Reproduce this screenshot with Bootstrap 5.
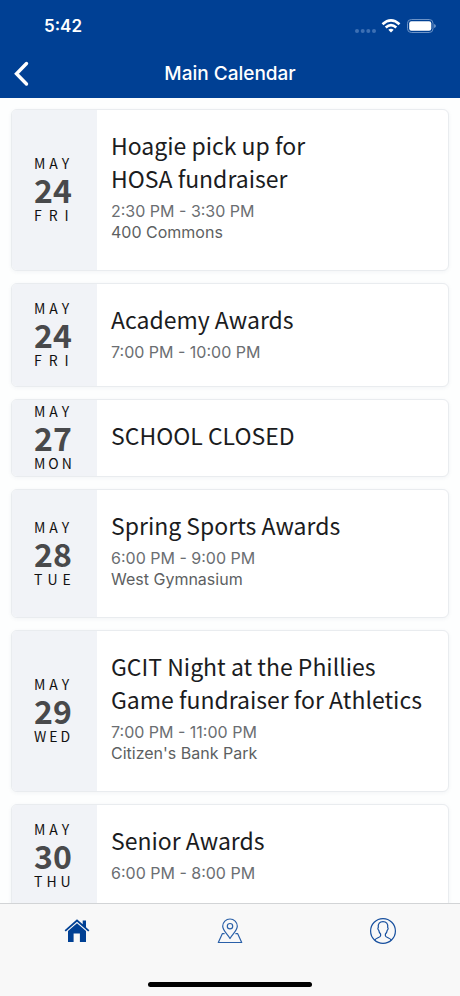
<!DOCTYPE html>
<html lang="en">
<head>
<meta charset="utf-8">
<meta name="viewport" content="width=device-width, initial-scale=1">
<title>Main Calendar</title>
<link rel="stylesheet" href="https://cdn.jsdelivr.net/npm/bootstrap@5.3.0/dist/css/bootstrap.min.css">
<style>
  body { font-family: Inter, "Liberation Sans", sans-serif; background: #fdfefe; }
  .app-header { background: #004094; }
  .status-row { height: 50px; padding: 1px 24px 0 44px; }
  .status-time { font-size: 17px; line-height: 24px; font-weight: 600; }
  .title-row { height: 48px; }
  .title-row h1 { font-size: 19px; line-height: 24px; font-weight: 500; }
  .side { width: 44px; height: 48px; }
  .event-list { padding: 11px 11px 12px; gap: 12px; scrollbar-width: none; }
  .event-list::-webkit-scrollbar { display: none; }
  .event { min-height: 78px; border: 1px solid #e9ecef; border-radius: 6px; background: #fff; box-shadow: 0 1px 4px rgba(40, 60, 90, .05); }
  .event-date { width: 85px; padding: 0 0 1px 22px; background: #f1f3f7; border-radius: 5px 0 0 5px; color: #111; font-family: "Noto Sans CJK JP", sans-serif; }
  .event-date span { font-size: 14px; line-height: 23px; letter-spacing: 4px; }
  .event-date .tight { letter-spacing: 3px; }
  .event-date .loose { letter-spacing: 5px; }
  .event-date .wide { letter-spacing: 7px; }
  .event-date strong { font-size: 32px; line-height: 29px; color: #48494b; }
  .event-body { padding: 19px 12px 23px 14px; }
  .event-body h2 { font-family: "Noto Sans CJK JP", sans-serif; font-size: 23px; line-height: 33px; font-weight: 400; color: #1b1c1e; }
  .event-body p { font-size: 16px; line-height: 21px; color: #6b6e72; }
  .event-time { padding-top: 6px; }
  .event-body .event-place { color: #5d5f62; padding-bottom: 4px; }
  .tab-bar { background: #f8f8f8; border-top: 1px solid #d2d4d6; }
  .tab-bar .nav-link { color: #004094; padding: 13px 0; line-height: 1; }
  .home-bar { width: 164px; height: 5px; margin: 24px auto 9px; background: #000; }
</style>
<script src="https://cdn.jsdelivr.net/npm/bootstrap@5.3.0/dist/js/bootstrap.bundle.min.js"></script>
</head>
<body>
<div class="vh-100 d-flex flex-column overflow-hidden">
  <header class="app-header text-white flex-shrink-0">
    <div class="status-row d-flex align-items-center justify-content-between">
      <span class="status-time">5:42</span>
      <svg width="82" height="16" viewBox="0 0 82 16" role="img" aria-label="Wi-Fi on, battery full">
        <g fill="#3d70b4"><circle cx="3" cy="13" r="2"/><circle cx="8.700" cy="13" r="2"/><circle cx="14.300" cy="13" r="2"/><circle cx="20" cy="13" r="2"/></g>
        <g fill="none" stroke="#fff" stroke-width="2.600"><path d="M28.500 6.200Q37 -1.600 45.500 6.200"/><path d="M31.700 9.500Q37 4.800 42.300 9.500"/></g>
        <path d="M37 14.600l-2.700-2.800Q37 9.700 39.700 11.800z" fill="#fff"/>
        <rect x="53.500" y="1.500" width="25.500" height="13" rx="3.800" fill="none" stroke="#6c93c7"/>
        <rect x="55.200" y="3.200" width="22.100" height="9.600" rx="2.200" fill="#fff"/>
        <path d="M80.200 6q1.600.5 1.600 2t-1.600 2z" fill="#7fa1ce"/>
      </svg>
    </div>
    <div class="title-row d-flex align-items-center justify-content-between">
      <button type="button" class="side btn border-0 p-0 text-white" aria-label="Back">
        <svg width="44" height="48" viewBox="0 0 44 48" class="d-block"><path d="M26.500 13.500L16.500 23.800L26.500 34" fill="none" stroke="#fff" stroke-width="3.400" stroke-linecap="round" stroke-linejoin="miter"/></svg>
      </button>
      <h1 class="m-0">Main Calendar</h1>
      <div class="side"></div>
    </div>
  </header>

  <main class="event-list d-flex flex-column flex-grow-1 overflow-auto">
    <article class="event d-flex flex-shrink-0">
      <div class="event-date d-flex flex-column justify-content-center flex-shrink-0"><span>MAY</span><strong>24</strong><span class="wide">FRI</span></div>
      <div class="event-body"><h2 class="m-0">Hoagie pick up for<br>HOSA fundraiser</h2><p class="event-time m-0">2:30 PM - 3:30 PM</p><p class="event-place m-0">400 Commons</p></div>
    </article>
    <article class="event d-flex flex-shrink-0">
      <div class="event-date d-flex flex-column justify-content-center flex-shrink-0"><span>MAY</span><strong>24</strong><span class="wide">FRI</span></div>
      <div class="event-body"><h2 class="m-0">Academy Awards</h2><p class="event-time m-0">7:00 PM - 10:00 PM</p></div>
    </article>
    <article class="event d-flex flex-shrink-0">
      <div class="event-date d-flex flex-column justify-content-center flex-shrink-0"><span>MAY</span><strong>27</strong><span class="tight">MON</span></div>
      <div class="event-body"><h2 class="m-0">SCHOOL CLOSED</h2></div>
    </article>
    <article class="event d-flex flex-shrink-0">
      <div class="event-date d-flex flex-column justify-content-center flex-shrink-0"><span>MAY</span><strong>28</strong><span class="loose">TUE</span></div>
      <div class="event-body"><h2 class="m-0">Spring Sports Awards</h2><p class="event-time m-0">6:00 PM - 9:00 PM</p><p class="event-place m-0">West Gymnasium</p></div>
    </article>
    <article class="event d-flex flex-shrink-0">
      <div class="event-date d-flex flex-column justify-content-center flex-shrink-0"><span>MAY</span><strong>29</strong><span class="tight">WED</span></div>
      <div class="event-body"><h2 class="m-0">GCIT Night at the Phillies<br>Game fundraiser for Athletics</h2><p class="event-time m-0">7:00 PM - 11:00 PM</p><p class="event-place m-0">Citizen's Bank Park</p></div>
    </article>
    <article class="event d-flex flex-shrink-0">
      <div class="event-date d-flex flex-column justify-content-center flex-shrink-0"><span>MAY</span><strong>30</strong><span>THU</span></div>
      <div class="event-body"><h2 class="m-0">Senior Awards</h2><p class="event-time m-0">6:00 PM - 8:00 PM</p></div>
    </article>
  </main>

  <footer class="tab-bar flex-shrink-0">
    <nav class="nav nav-fill" aria-label="Main">
      <a class="nav-link nav-item w-25" href="#" aria-label="Home" aria-current="page">
        <svg width="28" height="28" viewBox="0 0 28 28"><g fill="#004094"><path d="M14 2.200L1.600 13.200l1.200 1.300L14 4.700l11.200 9.800 1.200-1.300-3.400-3V3.600h-3.300v3.700z"/><path d="M14 6.200L5 14.100V25h5.600v-8.500h6.300V25H23V14.100z"/></g></svg>
      </a>
      <a class="nav-link nav-item w-25" href="#" aria-label="Map">
        <svg width="28" height="28" viewBox="0 0 28 28"><g fill="none" stroke="#2a60a8" stroke-width="1.200" stroke-linejoin="round"><path d="M14 21.500C11.500 17 6.700 13.500 6.700 9.300A7.300 7.300 0 0 1 21.300 9.300C21.300 13.500 16.500 17 14 21.500z"/><circle cx="14" cy="9.200" r="2.700"/><path d="M8.600 16.700H6.300L2.300 25.500H25.700L21.700 16.700H19.400"/></g></svg>
      </a>
      <a class="nav-link nav-item w-25" href="#" aria-label="Profile">
        <svg width="28" height="28" viewBox="0 0 28 28"><g fill="none" stroke="#164f9e" stroke-width="1.200" stroke-linejoin="round"><circle cx="14" cy="14" r="12.400"/><path d="M5.700 23.200C6.500 21 11.600 20.500 11.600 18.700V17C10.400 16 9.900 14.500 9.700 13.200C8.700 12.600 8.700 10.900 9.300 10.500C8.800 6.600 10.700 4.700 14 4.700S19.200 6.600 18.700 10.500C19.300 10.900 19.300 12.600 18.300 13.200C18.100 14.500 17.600 16 16.400 17V18.700C16.400 20.500 21.500 21 22.300 23.200"/></g></svg>
      </a>
    </nav>
    <div class="home-bar rounded-pill"></div>
  </footer>
</div>
</body>
</html>
